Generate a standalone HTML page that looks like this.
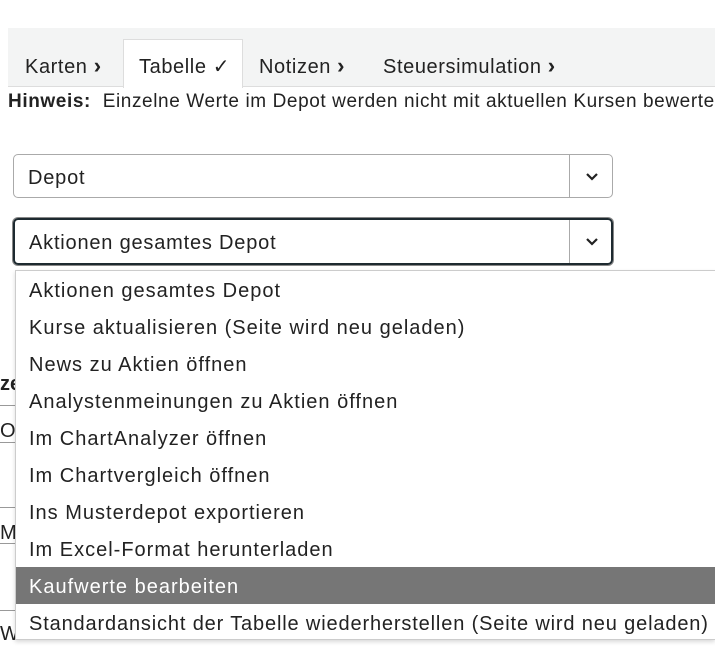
<!DOCTYPE html>
<html><head><meta charset="utf-8"><style>
*{box-sizing:border-box;margin:0;padding:0}
body{width:715px;height:646px;overflow:hidden;background:#fff;font-family:"Liberation Sans",sans-serif;color:#222;position:relative}
.tabs{position:absolute;left:8px;top:28px;width:707px;height:59px;background:#f3f4f4;border-bottom:1px solid #ddd}
.tab{position:absolute;top:27px;font-size:20px;line-height:24px;letter-spacing:0.6px;color:#222;white-space:nowrap}
.tab b{font-size:22px;line-height:0}
.active{position:absolute;left:115px;top:11px;width:120px;height:49px;background:#fff;border:1px solid #ddd;border-bottom:none}
.hint{position:absolute;left:8px;top:91px;font-size:19px;letter-spacing:0.6px;white-space:nowrap}
.sel{position:absolute;left:13px;width:600px;height:44px;border:1px solid #aaa;border-radius:5px;font-size:20px;letter-spacing:0.8px;padding:12px 0 0 14px}
.sel .div{position:absolute;left:555px;top:0;bottom:0;border-left:1px solid #aaa}
.sel svg{position:absolute;left:571px;top:17px}
.dd{position:absolute;left:15px;top:270px;width:700px;height:370px;background:#fff;border:1px solid #ccc;border-right:none;box-shadow:0 2px 4px rgba(0,0,0,.15)}
.it{height:37px;font-size:20px;letter-spacing:1px;padding:10px 0 0 13px;line-height:20px;white-space:nowrap}
.hl{background:#767676;color:#fff}
.bg{position:absolute;left:0;width:15px;border-top:1px solid #999}
.bt{position:absolute;left:0;font-size:20px}
</style></head><body>
<div class="tabs">
<div class="active"></div>
<div class="tab" style="left:17px">Karten <b>›</b></div>
<div class="tab" style="left:131px">Tabelle ✓</div>
<div class="tab" style="left:251px">Notizen <b>›</b></div>
<div class="tab" style="left:375px">Steuersimulation <b>›</b></div>
</div>
<div class="hint"><b>Hinweis:</b>&nbsp; Einzelne Werte im Depot werden nicht mit aktuellen Kursen bewertet</div>
<div class="sel" style="top:154px">Depot<div class="div"></div><svg width="14" height="10" viewBox="0 0 14 10"><path d="M2 2l5 5 5-5" fill="none" stroke="#222" stroke-width="2.2"/></svg></div>
<div class="sel" style="top:218px;height:47px;border:2px solid #1e2a30;box-shadow:0 0 0 1px #888">Aktionen gesamtes Depot<div class="div" style="left:554px"></div><svg width="14" height="10" viewBox="0 0 14 10" style="left:570px"><path d="M2 2l5 5 5-5" fill="none" stroke="#222" stroke-width="2.2"/></svg></div>
<div class="bt" style="top:373px;font-weight:bold">ze</div>
<div class="bg" style="top:405px"></div>
<div class="bt" style="top:420px">O</div>
<div class="bg" style="top:442px"></div>
<div class="bg" style="top:507px"></div>
<div class="bt" style="top:522px">M</div>
<div class="bg" style="top:543px"></div>
<div class="bg" style="top:610px"></div>
<div class="bt" style="top:623px">W</div>
<div class="dd">
<div class="it">Aktionen gesamtes Depot</div>
<div class="it">Kurse aktualisieren (Seite wird neu geladen)</div>
<div class="it">News zu Aktien öffnen</div>
<div class="it">Analystenmeinungen zu Aktien öffnen</div>
<div class="it">Im ChartAnalyzer öffnen</div>
<div class="it">Im Chartvergleich öffnen</div>
<div class="it">Ins Musterdepot exportieren</div>
<div class="it">Im Excel-Format herunterladen</div>
<div class="it hl">Kaufwerte bearbeiten</div>
<div class="it" style="letter-spacing:0.85px">Standardansicht der Tabelle wiederherstellen (Seite wird neu geladen)</div>
</div>
</body></html>
